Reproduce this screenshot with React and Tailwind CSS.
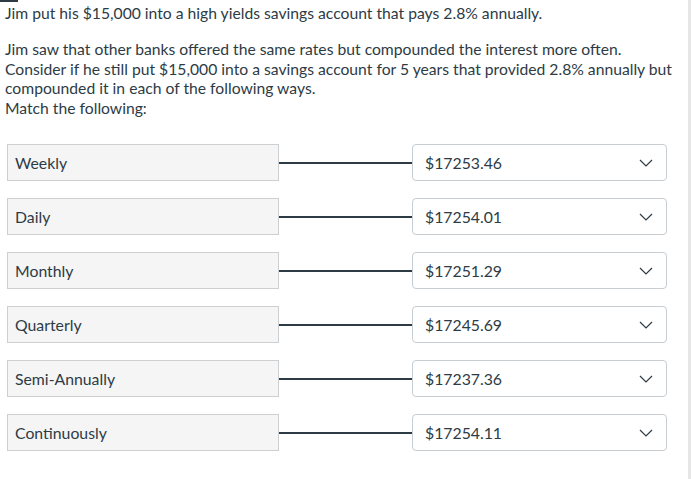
import React from "react";

const rows = [
    { label: "Weekly", value: "$17253.46" },
    { label: "Daily", value: "$17254.01" },
    { label: "Monthly", value: "$17251.29" },
    { label: "Quarterly", value: "$17245.69" },
    { label: "Semi-Annually", value: "$17237.36" },
    { label: "Continuously", value: "$17254.11" },
];

const Chevron = () => (
    <svg width="14" height="8" viewBox="0 0 14 8" fill="none">
        <path d="M1 1l6 6 6-6" stroke="#2d3b45" strokeWidth="1.2" />
    </svg>
);

const MatchRow = ({ label, value }) => (
    <div className="flex items-center h-[37px]">
        <div className="w-[272px] h-full flex items-center px-[7px] bg-[#f5f5f5] border border-[#cdd0d2] text-[15.8px]">
            {label}
        </div>
        <div className="w-[133px] h-[2px] bg-[#2d3b45]" />
        <div className="w-[255px] h-full flex items-center justify-between pl-[12px] pr-[13px] bg-white border border-[#c7cdd1] rounded-[4px] text-[15.8px]">
            <span>{value}</span>
            <Chevron />
        </div>
    </div>
);

export default function App() {
    return (
        <div className="relative w-[691px] h-[479px] bg-white overflow-hidden text-[#2d3b45] font-['Lato','Liberation_Sans',sans-serif]">
            <div className="absolute left-0 top-0 w-[18px] h-[2px] bg-[#2d3b45]" />
            <div className="absolute right-0 top-0 w-[3px] h-full bg-[#e6e6e6]" />
            <div className="pl-[5px] pr-[6px] pt-[4px] text-[15.7px] leading-[19.5px] whitespace-nowrap">
                <p>Jim put his $15,000 into a high yields savings account that pays 2.8% annually.</p>
                <p className="mt-[16.5px]">
                    Jim saw that other banks offered the same rates but compounded the interest more often.
                    <br />
                    Consider if he still put $15,000 into a savings account for 5 years that provided 2.8% annually but
                    <br />
                    compounded it in each of the following ways.
                    <br />
                    Match the following:
                </p>
            </div>
            <div className="flex flex-col gap-[17px] pl-[7px] mt-[26px]">
                {rows.map((r) => (
                    <MatchRow key={r.label} label={r.label} value={r.value} />
                ))}
            </div>
        </div>
    );
}
